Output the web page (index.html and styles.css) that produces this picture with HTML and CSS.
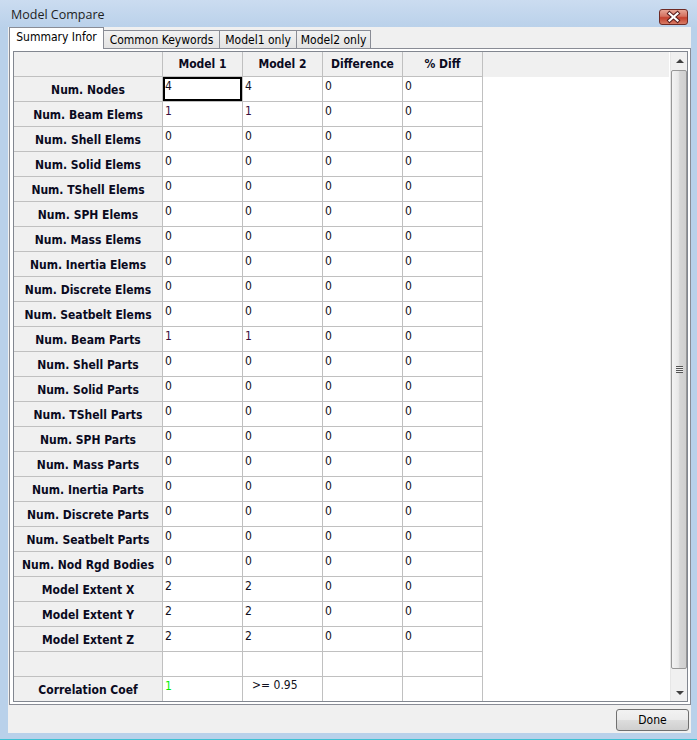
FILE: index.html
```html
<!DOCTYPE html>
<html>
<head>
<meta charset="utf-8">
<link rel="stylesheet" href="styles.css">
</head>
<body>
<div class="win">
  <div class="titlebar">
    <span class="title">Model Compare</span>
    <div class="closebtn">
      <svg width="27" height="14" viewBox="0 0 27 14">
        <path d="M9.5 3.5 L17.5 10.5 M17.5 3.5 L9.5 10.5" stroke="#5a1e1e" stroke-width="4.2" stroke-linecap="square"/>
        <path d="M9.5 3.5 L17.5 10.5 M17.5 3.5 L9.5 10.5" stroke="#ffffff" stroke-width="2.2" stroke-linecap="square"/>
      </svg>
    </div>
  </div>
  <div class="client">
    <div class="tabs">
      <div class="tab active t1">Summary Infor</div>
      <div class="tab t2">Common Keywords</div>
      <div class="tab t3">Model1 only</div>
      <div class="tab t4">Model2 only</div>
    </div>
    <div class="panel">
      <div class="grid">
        <div class="table">
          <div class="row head">
            <div class="rh"></div>
            <div class="ch">Model 1</div>
            <div class="ch">Model 2</div>
            <div class="ch">Difference</div>
            <div class="ch">% Diff</div>
          </div>
          <div class="row"><div class="rh">Num. Nodes</div><div class="c sel">4</div><div class="c">4</div><div class="c">0</div><div class="c">0</div></div>
          <div class="row"><div class="rh">Num. Beam Elems</div><div class="c p">1</div><div class="c p">1</div><div class="c">0</div><div class="c">0</div></div>
          <div class="row"><div class="rh">Num. Shell Elems</div><div class="c">0</div><div class="c">0</div><div class="c">0</div><div class="c">0</div></div>
          <div class="row"><div class="rh">Num. Solid Elems</div><div class="c">0</div><div class="c">0</div><div class="c">0</div><div class="c">0</div></div>
          <div class="row"><div class="rh">Num. TShell Elems</div><div class="c">0</div><div class="c">0</div><div class="c">0</div><div class="c">0</div></div>
          <div class="row"><div class="rh">Num. SPH Elems</div><div class="c">0</div><div class="c">0</div><div class="c">0</div><div class="c">0</div></div>
          <div class="row"><div class="rh">Num. Mass Elems</div><div class="c">0</div><div class="c">0</div><div class="c">0</div><div class="c">0</div></div>
          <div class="row"><div class="rh">Num. Inertia Elems</div><div class="c">0</div><div class="c">0</div><div class="c">0</div><div class="c">0</div></div>
          <div class="row"><div class="rh">Num. Discrete Elems</div><div class="c">0</div><div class="c">0</div><div class="c">0</div><div class="c">0</div></div>
          <div class="row"><div class="rh">Num. Seatbelt Elems</div><div class="c">0</div><div class="c">0</div><div class="c">0</div><div class="c">0</div></div>
          <div class="row"><div class="rh">Num. Beam Parts</div><div class="c p">1</div><div class="c p">1</div><div class="c">0</div><div class="c">0</div></div>
          <div class="row"><div class="rh">Num. Shell Parts</div><div class="c">0</div><div class="c">0</div><div class="c">0</div><div class="c">0</div></div>
          <div class="row"><div class="rh">Num. Solid Parts</div><div class="c">0</div><div class="c">0</div><div class="c">0</div><div class="c">0</div></div>
          <div class="row"><div class="rh">Num. TShell Parts</div><div class="c">0</div><div class="c">0</div><div class="c">0</div><div class="c">0</div></div>
          <div class="row"><div class="rh">Num. SPH Parts</div><div class="c">0</div><div class="c">0</div><div class="c">0</div><div class="c">0</div></div>
          <div class="row"><div class="rh">Num. Mass Parts</div><div class="c">0</div><div class="c">0</div><div class="c">0</div><div class="c">0</div></div>
          <div class="row"><div class="rh">Num. Inertia Parts</div><div class="c">0</div><div class="c">0</div><div class="c">0</div><div class="c">0</div></div>
          <div class="row"><div class="rh">Num. Discrete Parts</div><div class="c">0</div><div class="c">0</div><div class="c">0</div><div class="c">0</div></div>
          <div class="row"><div class="rh">Num. Seatbelt Parts</div><div class="c">0</div><div class="c">0</div><div class="c">0</div><div class="c">0</div></div>
          <div class="row"><div class="rh">Num. Nod Rgd Bodies</div><div class="c">0</div><div class="c">0</div><div class="c">0</div><div class="c">0</div></div>
          <div class="row"><div class="rh">Model Extent X</div><div class="c">2</div><div class="c">2</div><div class="c">0</div><div class="c">0</div></div>
          <div class="row"><div class="rh">Model Extent Y</div><div class="c">2</div><div class="c">2</div><div class="c">0</div><div class="c">0</div></div>
          <div class="row"><div class="rh">Model Extent Z</div><div class="c">2</div><div class="c">2</div><div class="c">0</div><div class="c">0</div></div>
          <div class="row"><div class="rh"></div><div class="c"></div><div class="c"></div><div class="c"></div><div class="c"></div></div>
          <div class="row"><div class="rh">Correlation Coef</div><div class="c green">1</div><div class="c thr">&gt;= 0.95</div><div class="c"></div><div class="c"></div></div>
        </div>
        <div class="vscroll">
          <div class="arrow up"></div>
          <div class="thumb"><div class="grip"></div></div>
          <div class="arrow down"></div>
        </div>
      </div>
    </div>
    <div class="footer">
      <div class="btn">Done</div>
    </div>
  </div>
  <div class="bottomline"></div>
</div>
</body>
</html>
```

FILE: styles.css
```css
html, body {
  margin: 0;
  padding: 0;
}
body {
  width: 697px;
  height: 740px;
  overflow: hidden;
  font-family: "DejaVu Sans Condensed", "DejaVu Sans", sans-serif;
  font-size: 12px;
  color: #000;
}
.win {
  width: 697px;
  height: 740px;
  background: #b9d1ea;
  display: flex;
  flex-direction: column;
}
.titlebar {
  height: 27px;
  flex: none;
  display: flex;
  align-items: flex-start;
  background: linear-gradient(#cbdcf0, #bad1ea);
}
.title {
  font-family: "Open Sans", "DejaVu Sans", sans-serif;
  font-size: 12.5px;
  color: #1e1e1e;
  margin: 6px 0 0 11px;
  flex: 1;
}
.closebtn {
  width: 27px;
  height: 14px;
  margin: 9px 9px 0 0;
  border: 1px solid #6e2a24;
  border-radius: 3px;
  background: linear-gradient(#e7a595 0%, #d4705f 45%, #c4402d 55%, #d77c66 100%);
  display: flex;
}
.client {
  flex: 1;
  margin: 0 6px 0 8px;
  background: #f0f0f0;
  display: flex;
  flex-direction: column;
}
.tabs {
  height: 21px;
  flex: none;
  display: flex;
  align-items: flex-end;
  padding-left: 1px;
}
.tab {
  height: 18px;
  box-sizing: border-box;
  border: 1px solid #898c95;
  border-bottom: none;
  border-left: none;
  background: linear-gradient(#f2f2f2, #e3e3e3);
  padding: 2px 0 0 0;
  text-align: center;
  font-size: 12px;
  line-height: 15px;
  color: #000;
  white-space: nowrap;
}
.t1 { width: 95px; }
.t2 { width: 116px; }
.t3 { width: 77px; }
.t4 { width: 74px; }
.tab.active {
  background: #fff;
  border-left: 1px solid #898c95;
  position: relative;
  z-index: 1;
  margin-bottom: -1px;
  height: 22px;
}
.panel {
  flex: none;
  height: 657px;
  box-sizing: border-box;
  margin-left: 1px;
  width: 682px;
  border: 1px solid #898c95;
  background: #fff;
  padding: 2px 2px 2px 3px;
}
.grid {
  height: 651px;
  box-sizing: border-box;
  border: 1px solid #828790;
  display: flex;
  overflow: hidden;
}
.table {
  width: 655px;
  flex: none;
  overflow: hidden;
  background: #fff;
}
.row {
  display: flex;
  height: 25px;
}
.row.head {
  background: #f0f0f0;
}
.rh {
  flex: none;
  border-right: 1px solid #c0c0c0;
  border-bottom: 1px solid #c0c0c0;
  background: #f0f0f0;
  font-weight: bold;
  display: flex;
  align-items: center;
  justify-content: center;
  color: #0a0a1e;
  white-space: nowrap;
  padding-top: 1px;
  box-sizing: border-box;
  width: 149px;
  height: 25px;
}
.ch {
  width: 79px;
  flex: none;
  height: 24px;
  border-right: 1px solid #c0c0c0;
  border-bottom: 1px solid #c0c0c0;
  font-weight: bold;
  display: flex;
  align-items: center;
  justify-content: center;
  color: #0a0a1e;
}
.c {
  width: 77px;
  flex: none;
  height: 21px;
  padding-left: 2px;
  padding-top: 3px;
  border-right: 1px solid #c0c0c0;
  border-bottom: 1px solid #c0c0c0;
  line-height: 13px;
  color: #101020;
}
.c.p { color: #3a103a; }
.c.sel { box-shadow: inset 0 0 0 2px #000; }
.c.green { color: #00f000; }
.c.thr {
  width: 70px;
  padding-left: 9px;
  padding-top: 2px;
  height: 22px;
}
.vscroll {
  width: 17px;
  flex: none;
  margin-left: 1px;
  background: #f0f0f0;
  border-left: 1px solid #e6e6e6;
  display: flex;
  flex-direction: column;
}
.arrow {
  height: 17px;
  flex: none;
  display: flex;
  align-items: center;
  justify-content: center;
}
.arrow.up::before {
  content: "";
  border-left: 4px solid transparent;
  border-right: 4px solid transparent;
  border-bottom: 4px solid #404040;
}
.arrow.down::before {
  content: "";
  border-left: 4px solid transparent;
  border-right: 4px solid transparent;
  border-top: 4px solid #404040;
}
.thumb {
  flex: 1;
  margin: 1px 1px 15px 0;
  border: 1px solid #979797;
  border-radius: 2px;
  background: linear-gradient(90deg, #f3f3f3 0%, #e8e8e8 45%, #d6d6d6 55%, #cfcfcf 100%);
  display: flex;
  align-items: center;
  justify-content: center;
}
.grip {
  width: 7px;
  height: 7px;
  background: repeating-linear-gradient(#555 0 1px, #eee 1px 2px);
}
.footer {
  flex: 1;
  display: flex;
  justify-content: flex-end;
  align-items: flex-start;
  padding: 4px 2px 0 0;
}
.btn {
  width: 71px;
  height: 20px;
  border: 1px solid #707070;
  border-radius: 3px;
  background: linear-gradient(#f2f2f2 0%, #ebebeb 50%, #dddddd 51%, #cfcfcf 100%);
  display: flex;
  align-items: center;
  justify-content: center;
  font-size: 12px;
  color: #000;
}
.bottomline {
  height: 7px;
  flex: none;
  border-bottom: 1px solid #3ec1d3;
  box-sizing: border-box;
}
```
